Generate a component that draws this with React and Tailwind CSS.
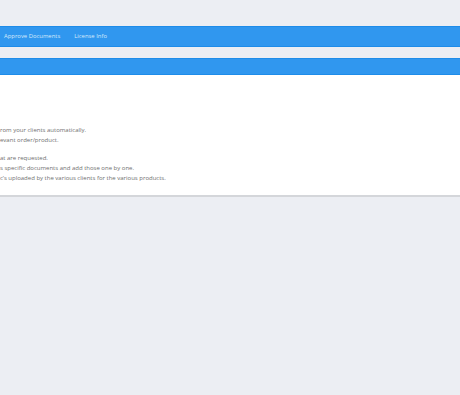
export default function App() {
  const lines = [
    ["rom your clients automatically.", "h-[10px]"],
    ["evant order/product.", "h-[10px]"],
    ["", "h-[8px]"],
    ["at are requested.", "h-[10px]"],
    ["s specific documents and add those one by one.", "h-[10px]"],
    ["c\u2019s uploaded by the various clients for the various products.", "h-[10px]"],
  ];
  return (
    <div className="w-[460px] h-[395px] overflow-hidden bg-[#eceef3]" style={{ fontFamily: "'Open Sans', sans-serif" }}>
      <div className="h-[26px]" />
      <nav className="h-[21px] bg-[#3097ef] border-y border-[#1e8ce9] flex items-center gap-[14px] pl-[4px] text-[5.9px] text-[#d6e9fb]">
        <span>Approve Documents</span>
        <span>License Info</span>
      </nav>
      <div className="h-[11px]" />
      <div className="h-[17px] bg-[#3097ef] border-y border-[#1e8ce9]" />
      <div className="bg-white h-[122px] border-b-2 border-[#d4d6da] pt-[50px] text-[6px] leading-[10px] text-[#6f6f6f]">
        {lines.map(([l, h], i) => (
          <div key={i} className={h + " whitespace-nowrap"}>{l}</div>
        ))}
      </div>
    </div>
  );
}
